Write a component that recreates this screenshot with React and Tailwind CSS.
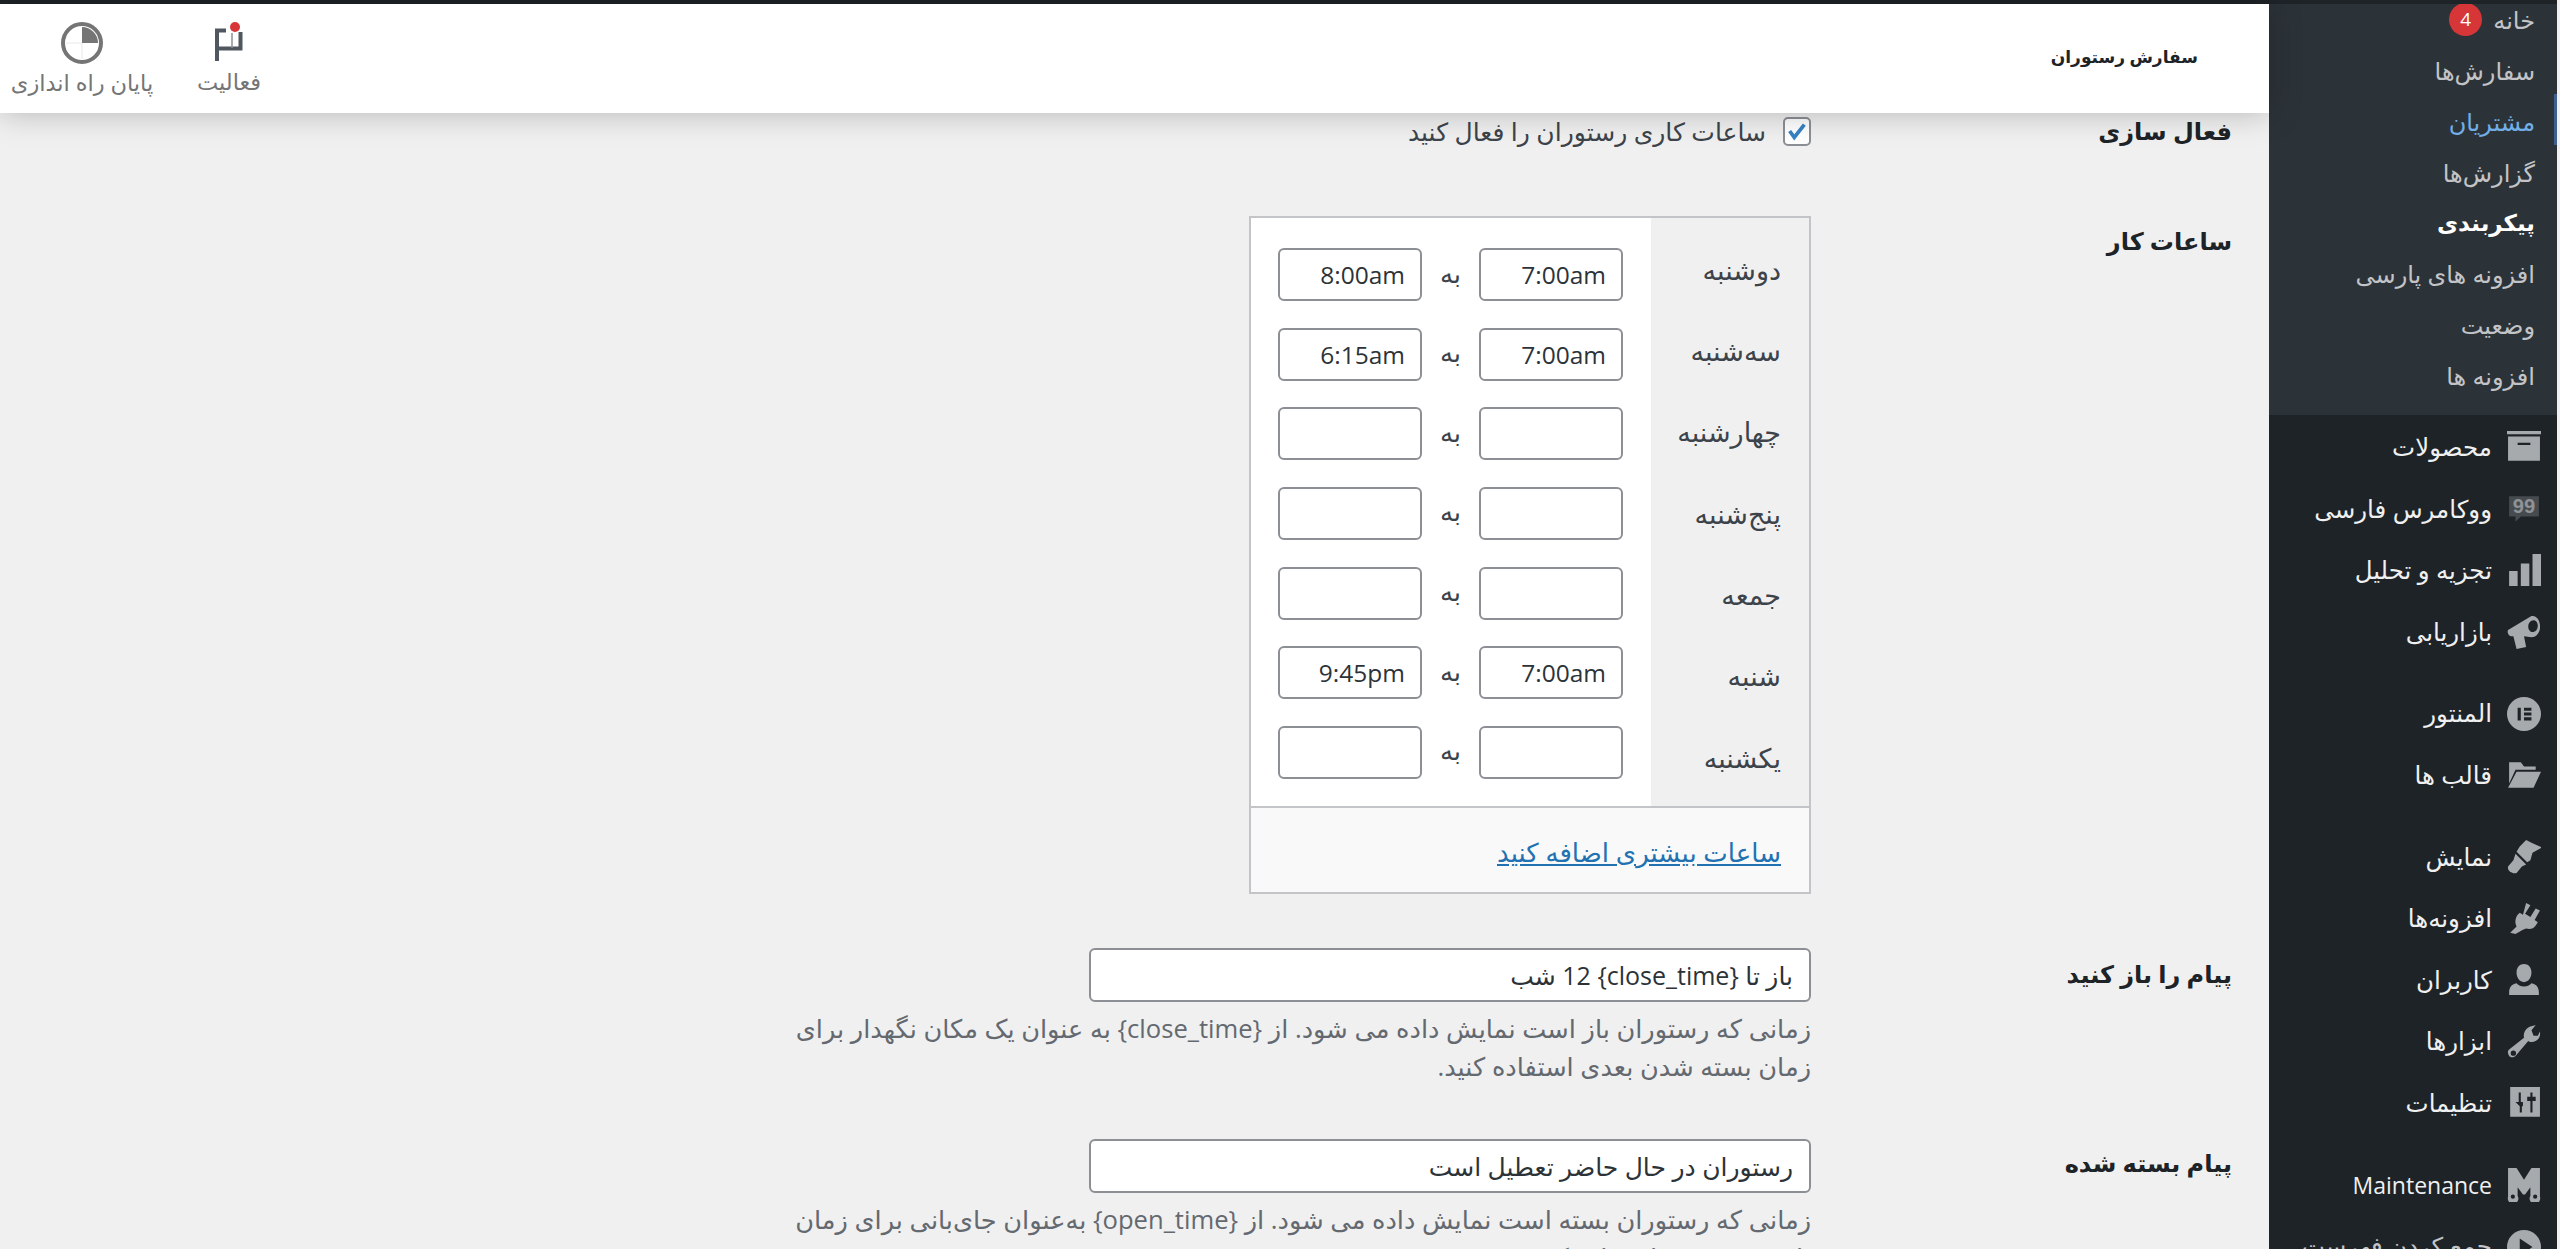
const subItems = [
  { label: 'سفارش‌ها' },
  { label: 'مشتریان', active: true },
  { label: 'گزارش‌ها' },
  { label: 'پیکربندی', current: true },
  { label: 'افزونه های پارسی' },
  { label: 'وضعیت' },
  { label: 'افزونه ها' },
];

const days = [
  { name: 'دوشنبه', open: '7:00am', close: '8:00am' },
  { name: 'سه‌شنبه', open: '7:00am', close: '6:15am' },
  { name: 'چهارشنبه', open: '', close: '' },
  { name: 'پنج‌شنبه', open: '', close: '' },
  { name: 'جمعه', open: '', close: '' },
  { name: 'شنبه', open: '7:00am', close: '9:45pm' },
  { name: 'یکشنبه', open: '', close: '' },
];

function Icon({ children }) {
  return (
    <svg viewBox="0 0 32 32" className="w-[34px] h-[34px] shrink-0 text-[#a7aaad]" fill="currentColor">
      {children}
    </svg>
  );
}

const icons = {
  archive: (
    <Icon>
      <path d="M0 1h32v3H0zM1 6h30v23H1zM10 12v2h12v-2z" fillRule="evenodd" />
    </Icon>
  ),
  quote: (
    <Icon>
      <path d="M2 4h28v19H13l-5 5v-5H2z" fill="#464b50" />
      <text x="16" y="20" textAnchor="middle" fontSize="19" fontWeight="700" fill="#8f9296" fontFamily="Liberation Sans, sans-serif">99</text>
    </Icon>
  ),
  bars: (
    <Icon>
      <path d="M2 16h8v14H2zM13 9h8v21h-8zM24 0h8v30h-8z" />
    </Icon>
  ),
  megaphone: (
    <Icon>
      <path d="M1 14 23 1c5-1 9 5 8 12-1 5-4 8-8 8l-7-1 2 10-9 2-3-12H4c-3-1-4-4-3-6zM25 5c-3 0-5 3-5 6s2 5 4 5c3 0 5-3 5-6s-2-5-4-5z" fillRule="evenodd" />
    </Icon>
  ),
  elementor: (
    <Icon>
      <path d="M16 0a16 16 0 1 1 0 32 16 16 0 0 1 0-32zM10 10v12h3V10zM16 10v3h7v-3zM16 14.500v3h7v-3zM16 19v3h7v-3z" fillRule="evenodd" />
    </Icon>
  ),
  folder: (
    <Icon>
      <path d="M2 4h11l3 4h11v3H8L2 24zM9 13h23l-7 15H1z" />
    </Icon>
  ),
  brush: (
    <Icon>
      <path d="M12 6 18 0l6 3 9 4-9 5-2 7-3 2-10-10zM8 13l10 10-4 2-5 6c-4 1-9-2-8-6l5-6z" />
    </Icon>
  ),
  plugin: (
    <Icon>
      <path d="m18 1 4 2-5 8 5 3 5-8 4 2-5 9 3 2-2 3c-2 3-5 4-9 3l-3 1-7 4-5-1 6-6c-2-4-1-8 1-11l2-2 3 2z" />
    </Icon>
  ),
  user: (
    <Icon>
      <path d="M16 1c4 0 7 3 7 8s-3 9-7 9-7-4-7-9 3-8 7-8zM2 28c0-5 2-8 7-9 2 2 4 3 7 3s5-1 7-3c5 1 7 4 7 9v2H2z" />
    </Icon>
  ),
  wrench: (
    <Icon>
      <path d="M31 6c1 5-2 9-7 10-2 0-3 0-4-1L9 28c-2 3-6 3-7 1s-2-4 0-6l14-11c-1-5 2-10 8-11l3-1-4 5 2 5 4 0zM6 24a2.500 2.500 0 1 0 0 5 2.500 2.500 0 0 0 0-5z" fillRule="evenodd" />
    </Icon>
  ),
  sliders: (
    <Icon>
      <path d="M3 1h28v28H3zM11 6v9H8l4 4v6h2v-6h1v-4h-2V6zM22 6v4h-3v4h3v11h2V14h3v-4h-3V6z" fillRule="evenodd" />
    </Icon>
  ),
  maintenance: (
    <Icon>
      <path d="M1 0h8l7 11 7-11h8v27a5 5 0 1 1-9-1v-8l-5 7h-2l-5-7v8a5 5 0 1 1-9 1z" />
      <circle cx="5.500" cy="27" r="2" fill="#1d2327" />
      <circle cx="26.500" cy="27" r="2" fill="#1d2327" />
    </Icon>
  ),
  play: (
    <Icon>
      <path d="M16 0a16 16 0 1 1 0 32 16 16 0 0 1 0-32zM12 8v16l12-8z" fillRule="evenodd" />
    </Icon>
  ),
};

const menuItems = [
  { label: 'محصولات', icon: 'archive' },
  { label: 'ووکامرس فارسی', icon: 'quote' },
  { label: 'تجزیه و تحلیل', icon: 'bars' },
  { label: 'بازاریابی', icon: 'megaphone' },
  { label: 'المنتور', icon: 'elementor', sep: true },
  { label: 'قالب ها', icon: 'folder' },
  { label: 'نمایش', icon: 'brush', sep: true },
  { label: 'افزونه‌ها', icon: 'plugin' },
  { label: 'کاربران', icon: 'user' },
  { label: 'ابزارها', icon: 'wrench' },
  { label: 'تنظیمات', icon: 'sliders' },
  { label: 'Maintenance', icon: 'maintenance', sep: true, latin: true },
  { label: 'جمع کردن فهرست', icon: 'play', dim: true },
];

function TimeInput({ value }) {
  return (
    <input
      type="text"
      readOnly
      value={value}
      dir="rtl"
      className="w-[144px] h-[53px] pr-[15px] pl-[10px] bg-white border-2 border-[#8c8f94] rounded-[6px] text-[24.500px] text-[#2c3338] outline-none"
    />
  );
}

function Sidebar() {
  return (
    <aside className="w-[288px] shrink-0 h-full bg-[#1d2327] overflow-hidden border-t-4 border-[#1d2327]">
      <ul className="bg-[#2c3338] relative -mt-[10px] pb-[14px] mb-[2px] text-[24px] leading-[51px] text-[#c3c4c7]">
        <li className="h-[51px] flex items-center gap-[11px] pr-[22px]">
          <span>خانه</span>
          <span className="w-[33px] h-[33px] rounded-full bg-[#d63638] text-white text-[19px] leading-[33px] flex items-center justify-center">4</span>
        </li>
        {subItems.map((item) => (
          <li
            key={item.label}
            className={
              'h-[50.800px] flex items-center pr-[22px] ' +
              (item.current ? 'font-bold text-white text-[23px] ' : '') +
              (item.active ? 'text-[#72aee6] ' : '')
            }
          >
            {item.label}
          </li>
        ))}
        <span className="absolute top-[100px] right-0 w-[3px] h-[51px] bg-[#3f5f8f]" />
      </ul>
      <ul className="text-[24.500px] text-[#f0f0f1]">
        {menuItems.map((item) => (
          <li
            key={item.label}
            className={
              'h-[61.600px] flex items-center gap-[15px] pr-[16px] ' +
              (item.sep ? 'mt-[20px] ' : '') +
              (item.latin ? 'text-[23px] ' : '') +
              (item.dim ? 'text-[#c3c4c7] ' : '')
            }
          >
            {icons[item.icon]}
            <span>{item.label}</span>
          </li>
        ))}
      </ul>
    </aside>
  );
}

function Header() {
  return (
    <header className="relative z-10 h-[109px] shrink-0 bg-white flex items-center justify-between pr-[71px] pl-[10px] shadow-[0_0_30px_rgba(0,0,0,0.25)]">
      <h1 className="text-[17px] font-bold text-[#1d2327] mb-[4px]">سفارش رستوران</h1>
      <div className="flex items-center gap-[42px] pt-[5px] text-[22.500px] leading-[28px] text-[#757575]">
        <button className="flex flex-col items-center w-[66px]">
          <svg viewBox="0 0 30 40" className="w-[30px] h-[40px] mt-[-5px] mb-[7px]">
            <path d="M3 40V9.500h9M26.500 11v16.500H3" fill="none" stroke="#50575e" strokeWidth="4" />
            <path d="M18 12v15" fill="none" stroke="#8c8f94" strokeWidth="1.500" />
            <circle cx="21" cy="6" r="5" fill="#d63638" />
          </svg>
          <span>فعالیت</span>
        </button>
        <button className="flex flex-col items-center w-[144px]">
          <svg viewBox="0 0 42 42" className="w-[42px] h-[42px] mt-[-3px] mb-[5px]">
            <circle cx="21" cy="21" r="19" fill="white" stroke="#757575" strokeWidth="4" />
            <path d="M21 21V5a16 16 0 0 1 16 16z" fill="#757575" />
            <path d="M21 21v16M21 21H5" stroke="#e8e8e8" strokeWidth="1" />
          </svg>
          <span>پایان راه اندازی</span>
        </button>
      </div>
    </header>
  );
}

function HoursTable() {
  return (
    <div className="w-[562px] border-2 border-[#c3c4c7]">
      <div className="flex h-[588px]">
        <div className="w-[158px] shrink-0 pt-[11px] pr-[28px] text-[27px] text-[#3c434a]">
          {days.map((day) => (
            <div key={day.name} className="h-[81.330px] flex items-center">
              {day.name}
            </div>
          ))}
        </div>
        <div className="flex-1 bg-white pt-[30px] pr-[28px] flex flex-col gap-[26.650px]">
          {days.map((day) => (
            <div key={day.name} className="flex items-center gap-[16.500px]">
              <TimeInput value={day.open} />
              <span className="w-[24px] text-center text-[#3c434a] text-[26px] leading-[30px] mb-[4px]">به</span>
              <TimeInput value={day.close} />
            </div>
          ))}
        </div>
      </div>
      <div className="h-[86px] bg-[#f9f9f9] border-t-2 border-[#c3c4c7] flex items-center pr-[28px] pt-[3px] text-[26px]">
        <a href="#" className="text-[#2271b1] underline">ساعات بیشتری اضافه کنید</a>
      </div>
    </div>
  );
}

function Row({ label, className, labelClass, children }) {
  return (
    <div className={'flex ' + className}>
      <div className={'w-[421px] shrink-0 font-bold text-[#1d2327] text-[24px] leading-[34px] ' + labelClass}>{label}</div>
      <div>{children}</div>
    </div>
  );
}

function MessageField({ value, lines }) {
  return (
    <>
      <input
        type="text"
        readOnly
        value={value}
        dir="rtl"
        className="block w-[722px] h-[54px] px-[16px] bg-white border-2 border-[#8c8f94] rounded-[6px] text-[25px] text-[#2c3338] outline-none"
      />
      <p className="mt-[8px] text-[25.600px] text-[#646970] leading-[38px] whitespace-nowrap">
        {lines[0]}
        <br />
        {lines[1]}
      </p>
    </>
  );
}

function Settings() {
  return (
    <main className="flex-1 overflow-hidden pr-[37px] text-[25px] leading-[34px] text-[#3c434a]">
      <Row label="فعال سازی" className="pt-[1px]" labelClass="">
        <label className="flex items-center gap-[17px]">
          <span className="w-[28px] h-[29px] bg-white border-2 border-[#8c8f94] rounded-[5px] flex items-center justify-center">
            <svg viewBox="0 0 24 24" className="w-[22px] h-[22px]">
              <path d="M4 12l5 7L20 5" fill="none" stroke="#3582c4" strokeWidth="4" />
            </svg>
          </span>
          <span>ساعات کاری رستوران را فعال کنید</span>
        </label>
      </Row>
      <Row label="ساعات کار" className="mt-[68px]" labelClass="pt-[8px]">
        <HoursTable />
      </Row>
      <Row label="پیام را باز کنید" className="mt-[54px]" labelClass="pt-[9px]">
        <MessageField
          value="باز تا {close_time} 12 شب"
          lines={[
            'زمانی که رستوران باز است نمایش داده می شود. از {close_time} به عنوان یک مکان نگهدار برای',
            'زمان بسته شدن بعدی استفاده کنید.',
          ]}
        />
      </Row>
      <Row label="پیام بسته شده" className="mt-[53px]" labelClass="pt-[7px]">
        <MessageField
          value="رستوران در حال حاضر تعطیل است"
          lines={[
            'زمانی که رستوران بسته است نمایش داده می شود. از {open_time} به‌عنوان جای‌بانی برای زمان',
            'باز شدن بعدی استفاده کنید.',
          ]}
        />
      </Row>
    </main>
  );
}

export default function App() {
  return (
    <div
      dir="rtl"
      className="w-[2560px] h-[1249px] overflow-hidden flex bg-[#f0f0f0] font-['Open_Sans','DejaVu_Sans',sans-serif]"
    >
      <div className="w-[3px] shrink-0 bg-[#f1f1f1]" />
      <Sidebar />
      <div className="flex-1 flex flex-col min-w-0 h-full">
        <div className="h-[4px] shrink-0 bg-[#1d2327]" />
        <Header />
        <Settings />
      </div>
    </div>
  );
}
